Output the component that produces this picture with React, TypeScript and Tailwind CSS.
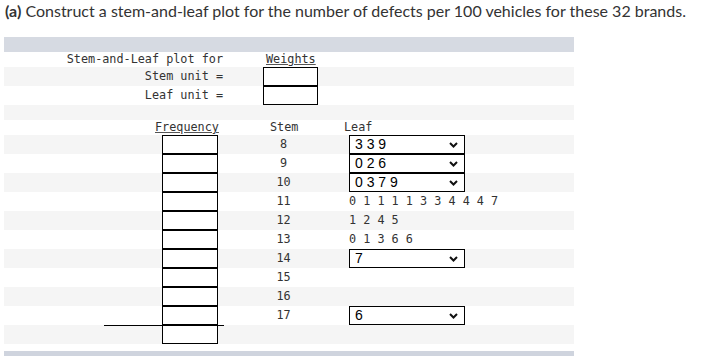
const mono = "font-['DejaVu_Sans_Mono',monospace] text-[11.8px] text-[#333]";

const stems = [
  { stem: "8", select: "3 3 9" },
  { stem: "9", select: "0 2 6" },
  { stem: "10", select: "0 3 7 9" },
  { stem: "11", text: "0 1 1 1 1 3 3 4 4 4 7" },
  { stem: "12", text: "1 2 4 5" },
  { stem: "13", text: "0 1 3 6 6" },
  { stem: "14", select: "7" },
  { stem: "15" },
  { stem: "16" },
  { stem: "17", select: "6" },
];

function Box({ w }: { w: string }) {
  return <div className={`${w} h-[19px] shrink-0 border border-black bg-white`} />;
}

function LeafSelect({ value }: { value: string }) {
  return (
    <div className="flex h-[19px] w-[116px] items-center justify-between border border-black bg-white pl-[5px] pr-[6px] font-['Liberation_Sans',Arial,sans-serif] text-[14px] leading-[17px] text-black">
      <span className="whitespace-pre">{value}</span>
      <svg width="9" height="6" viewBox="0 0 9 6">
        <path d="M1 1 L4.5 4.5 L8 1" fill="none" stroke="#111" strokeWidth="2" />
      </svg>
    </div>
  );
}

export default function App() {
  return (
    <div className="h-[361px] w-[706px] bg-white">
      {/* question heading */}
      <div className="pl-[5px] pt-[1px] font-['Lato',sans-serif] text-[16px] leading-[20px] text-[#333]">
        <b>(a)</b> Construct a stem-and-leaf plot for the number of defects per 100 vehicles for these 32 brands.
      </div>

      <div className={`ml-[4px] mt-[16px] w-[570px] ${mono}`}>
        <div className="h-[15px] bg-[#d6dae2]" />

        {/* units */}
        <div className="flex h-[15px] items-center pt-px">
          <div className="w-[219px] text-right">Stem-and-Leaf plot for</div>
          <div className="ml-[43px] underline underline-offset-[1px] decoration-[#555]">Weights</div>
        </div>
        <div className="flex h-[19px] items-center bg-[#f5f5f5]">
          <div className="w-[219px] text-right">Stem unit =</div>
          <div className="ml-[40px]"><Box w="w-[55px]" /></div>
        </div>
        <div className="flex h-[19px] items-center">
          <div className="w-[219px] text-right">Leaf unit =</div>
          <div className="ml-[40px]"><Box w="w-[55px]" /></div>
        </div>
        <div className="h-[15px] bg-[#f5f5f5]" />

        {/* header */}
        <div className="flex h-[15px] items-center pt-px">
          <div className="w-[151px]" />
          <div className="w-[115px] underline underline-offset-[1px] decoration-[#555]">Frequency</div>
          <div className="w-[74px]">Stem</div>
          <div>Leaf</div>
        </div>

        {stems.map((r, i) => (
          <div key={r.stem} className={`flex h-[19px] items-center ${i % 2 === 0 ? "bg-[#f5f5f5]" : "bg-white"}`}>
            <div className="w-[158px]" />
            <Box w="w-[56px]" />
            <div className="w-[131px] text-center">{r.stem}</div>
            <div>
              {r.select && <LeafSelect value={r.select} />}
              {r.text && <span className="whitespace-pre">{r.text}</span>}
            </div>
          </div>
        ))}

        {/* total row */}
        <div className="flex h-[19px] items-start bg-[#f5f5f5]">
          <div className="w-[100px]" />
          <div className="w-[120px] border-t border-black">
            <div className="-mt-px ml-[58px]"><Box w="w-[56px]" /></div>
          </div>
        </div>

        <div className="mt-[7px] h-[5px] bg-[#cfd4de]" />
      </div>
    </div>
  );
}
